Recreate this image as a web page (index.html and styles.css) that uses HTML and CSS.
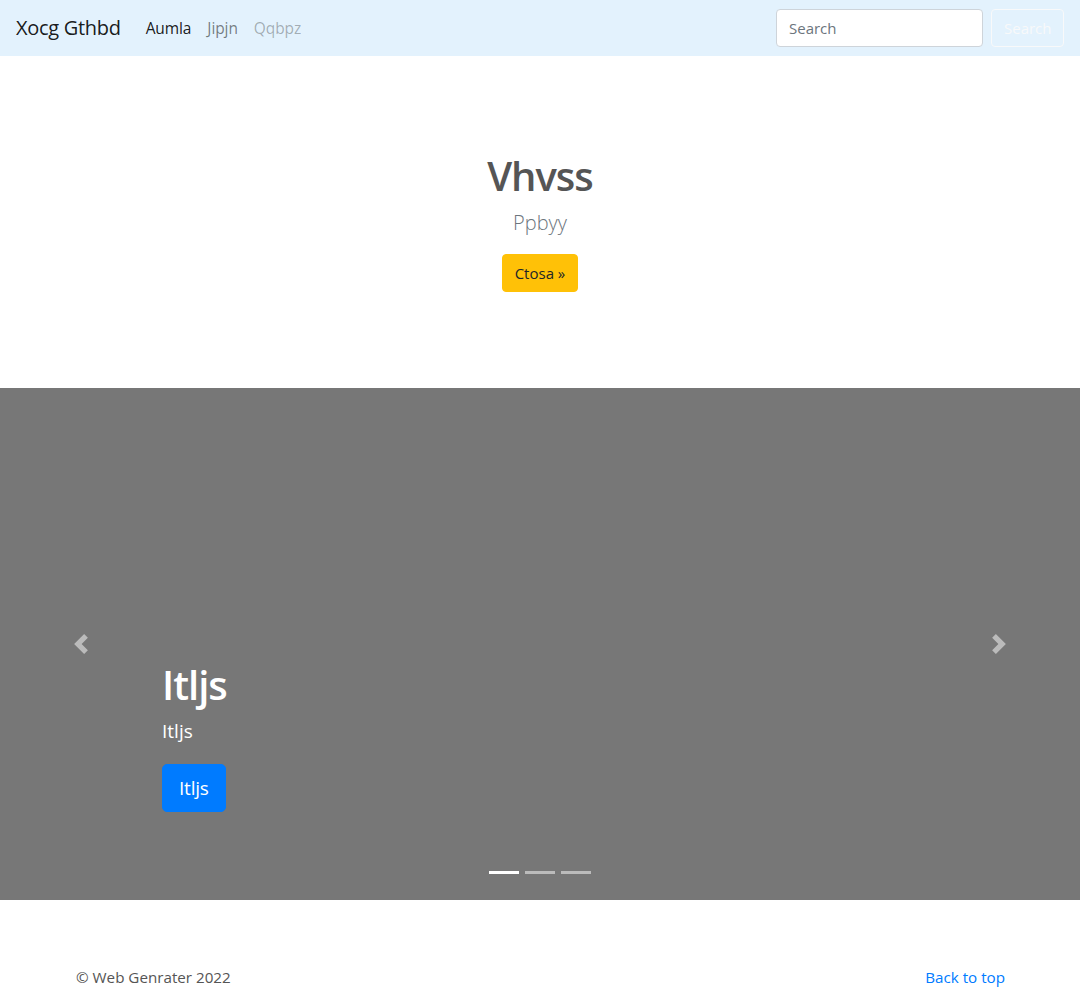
FILE: index.html
```html
<!DOCTYPE html>
<html lang="en">
<head>
<meta charset="utf-8">
<title>Xocg Gthbd</title>
<link rel="stylesheet" href="styles.css">
</head>
<body>
<nav class="navbar">
  <a class="brand" href="#">Xocg Gthbd</a>
  <ul class="nav">
    <li><a class="nav-link active" href="#">Aumla</a></li>
    <li><a class="nav-link" href="#">Jipjn</a></li>
    <li><a class="nav-link disabled" href="#">Qqbpz</a></li>
  </ul>
  <form class="search">
    <input class="search-input" type="text" placeholder="Search">
    <button class="search-btn" type="button">Search</button>
  </form>
</nav>

<section class="hero">
  <h1 class="hero-title">Vhvss</h1>
  <p class="hero-lead">Ppbyy</p>
  <a class="btn-warning" href="#">Ctosa »</a>
</section>

<div class="carousel">
  <a class="control control-prev" href="#" aria-label="Previous">
    <svg width="20" height="20" viewBox="0 0 8 8" fill="#fff"><path d="M5.25 0l-4 4 4 4 1.5-1.5L4.25 4l2.5-2.5L5.25 0z"/></svg>
  </a>
  <a class="control control-next" href="#" aria-label="Next">
    <svg width="20" height="20" viewBox="0 0 8 8" fill="#fff"><path d="M2.75 0l-1.5 1.5L3.75 4l-2.5 2.5L2.75 8l4-4-4-4z"/></svg>
  </a>
  <div class="caption">
    <h1 class="caption-title">Itljs</h1>
    <p class="caption-text">Itljs</p>
    <p class="caption-action"><a class="btn-primary" href="#">Itljs</a></p>
  </div>
  <ol class="indicators">
    <li class="active"></li>
    <li></li>
    <li></li>
  </ol>
</div>

<footer class="footer">
  <p class="copy">© Web Genrater 2022</p>
  <a class="top-link" href="#">Back to top</a>
</footer>
</body>
</html>
```

FILE: styles.css
```css
* { box-sizing: border-box; }
html, body { margin: 0; padding: 0; }
body {
  font-family: "Open Sans", "Noto Sans", "Liberation Sans", sans-serif;
  font-size: 16px;
  line-height: 1.5;
  color: #212529;
  background: #fff;
  overflow: hidden;
}
a { text-decoration: none; }

.navbar {
  height: 56px;
  background: #e3f2fd;
  display: flex;
  align-items: center;
  padding: 8px 16px;
}
.brand {
  font-size: 20px;
  line-height: 30px;
  color: rgba(0,0,0,.9);
  margin-right: 17px;
  letter-spacing: -0.3px;
}
.nav {
  display: flex;
  list-style: none;
  margin: 0;
  padding: 0;
  flex: 1;
}
.nav-link {
  display: block;
  padding: 9px 8px 7px;
  color: rgba(0,0,0,.5);
  font-size: 15.5px;
  letter-spacing: -0.1px;
}
.nav-link.active { color: rgba(0,0,0,.9); }
.nav-link.disabled { color: rgba(0,0,0,.3); }

.search { display: flex; align-items: center; }
.search-input {
  width: 207px;
  height: 38px;
  padding: 6px 12px;
  font: inherit;
  font-size: 15px;
  color: #495057;
  border: 1px solid #ced4da;
  border-radius: 4px;
  background: #fff;
  margin-right: 8px;
}
.search-input::placeholder { color: #6c757d; }
.search-btn {
  height: 38px;
  width: 73px;
  padding: 6px 12px;
  font: inherit;
  font-size: 15px;
  color: #f8f9fa;
  background: transparent;
  border: 1px solid #f8f9fa;
  border-radius: 4px;
}

.hero {
  height: 332px;
  padding-top: 96px;
  display: flex;
  flex-direction: column;
  align-items: center;
  text-align: center;
}
.hero-title {
  margin: 0 0 8px;
  font-size: 40px;
  line-height: 48px;
  font-weight: 600;
  color: #555;
  letter-spacing: -1px;
}
.hero-lead {
  margin: 0 0 16px;
  font-size: 20px;
  line-height: 30px;
  font-weight: 300;
  color: #6c757d;
}
.btn-warning {
  display: inline-block;
  background: #ffc107;
  color: #212529;
  border-radius: 4px;
  padding: 6px 12px;
  font-size: 15px;
  line-height: 24px;
  border: 1px solid #ffc107;
}

.carousel {
  position: relative;
  height: 512px;
  background: #777;
}
.control {
  position: absolute;
  top: 0;
  bottom: 0;
  width: 15%;
  display: flex;
  align-items: center;
  justify-content: center;
  opacity: .5;
}
.control-prev { left: 0; }
.control-next { right: 0; }
.caption {
  position: absolute;
  left: 15%;
  right: 15%;
  bottom: 50px;
  padding: 20px 0;
  color: #fff;
}
.caption-title {
  margin: 0 0 7px;
  font-size: 40px;
  line-height: 48px;
  font-weight: 600;
  letter-spacing: -1px;
}
.caption-text {
  margin: 0 0 16px;
  font-size: 19px;
  line-height: 30px;
}
.caption-action { margin: 0 0 16px; line-height: 52px; height: 52px; }
.btn-primary {
  display: inline-block;
  vertical-align: top;
  margin-top: 2px;
  background: #007bff;
  color: #fff;
  border: 1px solid #007bff;
  border-radius: 5px;
  padding: 8px 16px;
  font-size: 19px;
  line-height: 30px;
  letter-spacing: -0.2px;
}
.indicators {
  position: absolute;
  left: 0;
  right: 0;
  bottom: 16px;
  margin: 0;
  padding: 0;
  list-style: none;
  display: flex;
  justify-content: center;
}
.indicators li {
  width: 30px;
  height: 3px;
  margin: 10px 3px;
  background: #fff;
  opacity: .5;
}
.indicators li.active { opacity: 1; }

.footer {
  width: 960px;
  margin: 0 auto;
  padding: 65px 15px 0;
  display: flex;
  justify-content: space-between;
  align-items: baseline;
}
.copy {
  margin: 0 0 0 1px;
  color: #555;
  font-size: 15.2px;
  line-height: 24px;
}
.top-link {
  color: #007bff;
  font-size: 15.2px;
  line-height: 24px;
}
```
